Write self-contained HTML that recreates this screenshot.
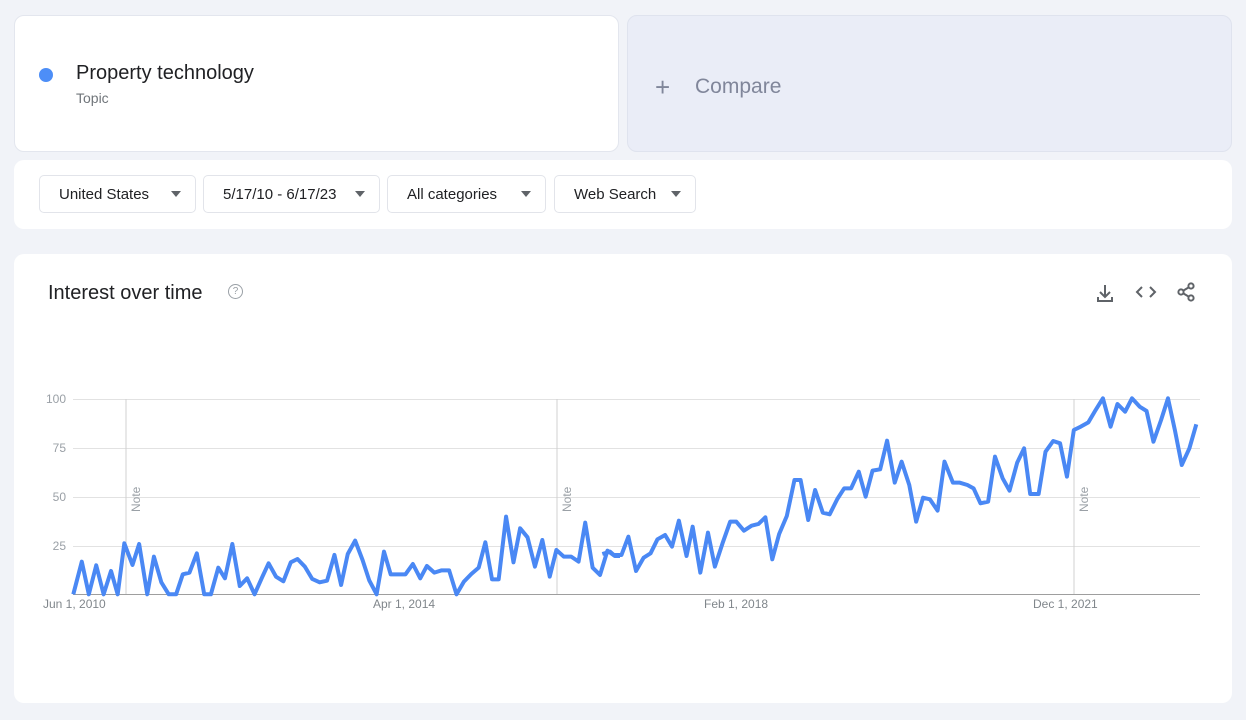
<!DOCTYPE html>
<html><head><meta charset="utf-8"><style>
body{margin:0;width:1246px;height:720px;background:#f1f3f8;font-family:"Liberation Sans",sans-serif;position:relative;overflow:hidden}
.card{position:absolute;background:#fff;border-radius:10px;border:1px solid #e3e6ee;box-sizing:border-box}
.btn{position:absolute;top:175px;height:38px;border:1px solid #e2e4ea;border-radius:5px;background:#fff;box-sizing:border-box;font-size:15px;color:#202124;line-height:38px;padding-left:19px}
.btn:after{content:"";position:absolute;right:14px;top:15px;border-left:5px solid transparent;border-right:5px solid transparent;border-top:6px solid #5f6368}
.yl{position:absolute;left:30px;width:36px;text-align:right;font-size:12px;color:#9aa0a6}
.xl{position:absolute;top:597px;font-size:12px;color:#80868b}
</style></head><body>
<div class="card" style="left:14px;top:15px;width:605px;height:137px"></div>
<div style="position:absolute;left:39px;top:68px;width:14px;height:14px;border-radius:50%;background:#4d8ef7"></div>
<div style="position:absolute;left:76px;top:62px;font-size:20px;color:#202124">Property technology</div>
<div style="position:absolute;left:76px;top:90px;font-size:14px;color:#70757a">Topic</div>
<div class="card" style="left:627px;top:15px;width:605px;height:137px;background:#eaedf7;border-color:#dfe3ee"></div>
<div style="position:absolute;left:655px;top:72px;font-size:26px;color:#80869a;font-weight:300">+</div>
<div style="position:absolute;left:695px;top:75px;font-size:21px;color:#80869a">Compare</div>
<div class="card" style="left:14px;top:160px;width:1218px;height:69px;border:none"></div>
<div class="btn" style="left:39px;width:157px">United States</div>
<div class="btn" style="left:203px;width:177px">5/17/10 - 6/17/23</div>
<div class="btn" style="left:387px;width:159px">All categories</div>
<div class="btn" style="left:554px;width:142px">Web Search</div>
<div class="card" style="left:14px;top:254px;width:1218px;height:449px;border:none"></div>
<div style="position:absolute;left:48px;top:282px;font-size:20px;color:#202124">Interest over time</div>
<div style="position:absolute;left:228px;top:284px;width:13px;height:13px;border:1.5px solid #9aa0a6;border-radius:50%;font-size:10px;line-height:13px;text-align:center;color:#9aa0a6">?</div>
<svg style="position:absolute;left:0;top:0" width="1246" height="720">
<g fill="none" stroke="#5f6368" stroke-width="2">
<path d="M1105 285v11M1100 292l5 5 5-5M1098 297v4h14v-4"/>
<path d="M1142 287l-5 5 5 5M1150 287l5 5-5 5"/>
<circle cx="1191" cy="286" r="2.6"/><circle cx="1181" cy="292" r="2.6"/><circle cx="1191" cy="298" r="2.6"/><path d="M1183.5 290.5l5-3M1183.5 293.5l5 3"/>
</g>
<g stroke="#e2e2e2" stroke-width="1"><path d="M73 399.5H1200M73 448.5H1200M73 497.5H1200M73 546.5H1200"/></g>
<g stroke="#d0d0d0"><path d="M126 399v195M557 399v195M1074 399v195"/></g>
<path d="M73 594.5H1200" stroke="#9e9e9e"/>
<g fill="#9aa0a6" font-size="12" font-family="Liberation Sans,sans-serif">
<text transform="translate(140,512) rotate(-90)">Note</text>
<text transform="translate(571,512) rotate(-90)">Note</text>
<text transform="translate(1088,512) rotate(-90)">Note</text></g>
<g fill="none" stroke="#4a88f4" stroke-width="4" stroke-linejoin="round">
<polyline vector-effect="non-scaling-stroke" transform="translate(40,380) scale(0.3699,0.3333)" points="90,643 113,545 132,643 152,556 172,643 192,573 210,643 228,490 250,555 268,492 290,643 308,530 328,607 348,643 368,643 386,583 404,578 424,520 444,643 462,643 482,563 500,595 520,492 540,618 560,595 580,643 600,593 618,550 638,590 658,604 678,547 696,537 716,560 736,597 756,607 776,602 796,525 814,615 832,522 852,482 872,540 890,601 910,643 930,515 948,583 968,583 988,583 1008,552 1028,595 1046,558 1066,578 1086,571 1106,571 1126,643 1146,605 1166,582 1186,563 1204,487 1222,598 1240,598 1260,410 1280,547 1298,445 1318,472 1338,560 1358,480 1378,590 1396,510 1416,530 1436,530 1456,545 1474,428 1494,563 1514,585 1534,512 1554,528 1568,528"/>
<polyline vector-effect="non-scaling-stroke" transform="translate(610,380) scale(0.3827,0.3333)" points="-20,522 0,515 10,525 30,525 48,470 68,573 88,533 106,520 124,478 144,465 162,500 180,422 200,528 216,440 236,578 256,458 274,560 294,490 314,425 330,425 350,452 370,437 388,432 406,412 424,538 442,462 462,408 482,300 498,300 518,420 536,330 556,398 574,403 594,357 612,325 630,325 650,275 668,350 686,272 706,268 724,182 744,308 762,245 782,315 800,425 818,353 836,358 856,392 874,245 896,308 914,308 934,315 950,325 968,370 988,365 1006,230 1026,295 1044,332 1064,248 1082,205 1098,342 1120,342 1138,215 1158,183 1176,190 1194,290 1212,150 1230,140 1250,127 1268,92 1288,55 1308,140 1326,72 1346,95 1364,55 1384,80 1402,93 1420,185 1440,120 1458,55 1476,150 1494,255 1514,205 1532,133"/>
</g></svg>
<div class="yl" style="top:392px">100</div><div class="yl" style="top:441px">75</div><div class="yl" style="top:490px">50</div><div class="yl" style="top:539px">25</div>
<div class="xl" style="left:43px">Jun 1, 2010</div>
<div class="xl" style="left:373px">Apr 1, 2014</div>
<div class="xl" style="left:704px">Feb 1, 2018</div>
<div class="xl" style="left:1033px">Dec 1, 2021</div>
</body></html>
